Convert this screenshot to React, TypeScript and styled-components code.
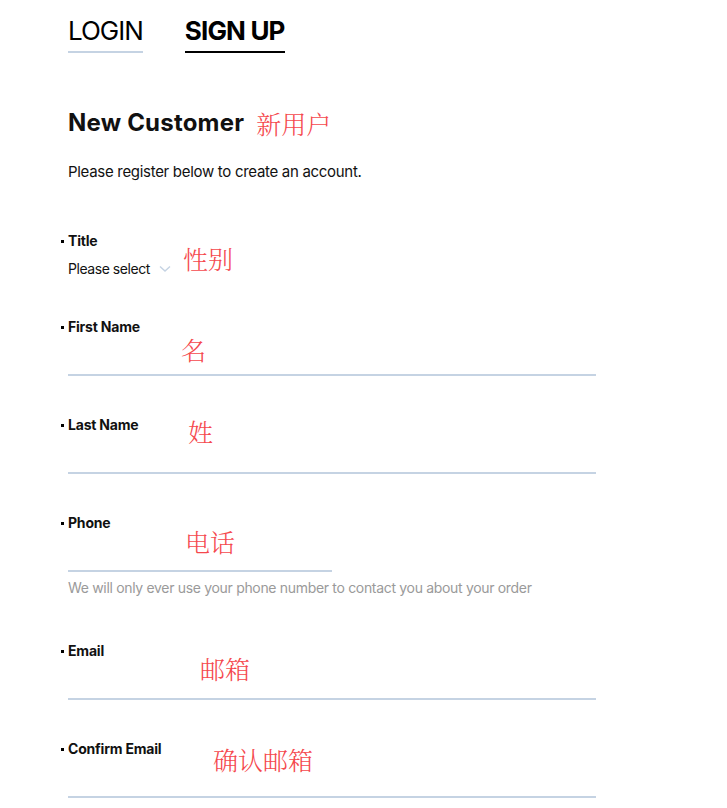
import React from 'react';
import styled, { createGlobalStyle } from 'styled-components';

const GlobalStyle = createGlobalStyle`
  body {
    margin: 0;
    background: #fff;
    font-family: Inter, "Noto Sans", sans-serif;
    color: #111;
  }
`;

const Page = styled.div`
  padding: 16px 0 0 68px;
  width: 528px;
`;

const Tabs = styled.nav`
  display: flex;
  gap: 42px;
`;

const Tab = styled.div<{ $active?: boolean }>`
  font-size: 26px;
  line-height: 30px;
  font-weight: ${(p) => (p.$active ? 700 : 400)};
  letter-spacing: ${(p) => (p.$active ? '-0.85px' : '-1px')};
  color: #000;
  padding-bottom: 5px;
  border-bottom: 2px solid ${(p) => (p.$active ? '#000' : '#c5d3e3')};
`;

const Heading = styled.h1`
  display: flex;
  align-items: center;
  margin: 55px 0 0;
  font-size: 24px;
  line-height: 30px;
  font-weight: 700;
  letter-spacing: 0.2px;
`;

const Note = styled.span<{ $top?: number; $left?: number }>`
  font-family: "Noto Serif CJK SC", "Noto Sans CJK SC", sans-serif;
  font-size: 25px;
  line-height: 28px;
  font-weight: 300;
  color: #f5484d;
  letter-spacing: 0;
`;

const HeadingNote = styled(Note)`
  margin-left: 12px;
`;

const FieldNote = styled(Note)`
  position: absolute;
  top: ${(p) => p.$top}px;
  left: ${(p) => p.$left}px;
`;

const Intro = styled.p`
  margin: 24px 0 50px;
  font-size: 15px;
  line-height: 20px;
  letter-spacing: -0.3px;
`;

const Form = styled.form`
  display: flex;
  flex-direction: column;
  gap: 40px;
`;

const Field = styled.div`
  position: relative;
  display: flex;
  flex-direction: column;
`;

const Label = styled.label`
  position: relative;
  font-size: 14px;
  line-height: 18px;
  font-weight: 700;
  letter-spacing: -0.2px;
  &::before {
    content: '';
    position: absolute;
    left: -7px;
    top: 8px;
    width: 3px;
    height: 3px;
    background: #000;
  }
`;

const Select = styled.div`
  display: flex;
  align-items: center;
  gap: 9px;
  margin-top: 10px;
  font-size: 14px;
  line-height: 18px;
  letter-spacing: -0.45px;
  color: #111;
`;

const Input = styled.div<{ $short?: boolean }>`
  height: 38px;
  width: ${(p) => (p.$short ? '264px' : '100%')};
  border-bottom: 2px solid #c5d3e3;
`;

const Help = styled.p`
  margin: 7px 0 5px;
  font-size: 14px;
  line-height: 18px;
  letter-spacing: -0.32px;
  color: #9a9a9a;
`;

const Chevron = () => (
  <svg width="12" height="8" viewBox="0 0 12 8">
    <path d="M1 1.5l5 4.5 5-4.5" fill="none" stroke="#c5d3e3" strokeWidth="1.4" />
  </svg>
);

interface TextField {
  label: string;
  note: string;
  top: number;
  left: number;
  short?: boolean;
  help?: string;
}

const fields: TextField[] = [
  { label: 'First Name', note: '名', top: 17, left: 113 },
  { label: 'Last Name', note: '姓', top: 1, left: 120 },
  {
    label: 'Phone',
    note: '电话',
    top: 13,
    left: 117,
    short: true,
    help: 'We will only ever use your phone number to contact you about your order',
  },
  { label: 'Email', note: '邮箱', top: 12, left: 132 },
  { label: 'Confirm Email', note: '确认邮箱', top: 5, left: 145 },
];

const App: React.FC = () => {
  return (
    <>
      <GlobalStyle />
      <Page>
        <Tabs>
          <Tab>LOGIN</Tab>
          <Tab $active>SIGN UP</Tab>
        </Tabs>
        <Heading>
          New Customer
          <HeadingNote>新用户</HeadingNote>
        </Heading>
        <Intro>Please register below to create an account.</Intro>
        <Form>
          <Field>
            <Label>Title</Label>
            <Select>
              Please select
              <Chevron />
            </Select>
            <FieldNote $top={12} $left={115}>性别</FieldNote>
          </Field>
          {fields.map((f) => (
            <Field key={f.label}>
              <Label>{f.label}</Label>
              <Input $short={f.short} />
              {f.help && <Help>{f.help}</Help>}
              <FieldNote $top={f.top} $left={f.left}>{f.note}</FieldNote>
            </Field>
          ))}
        </Form>
      </Page>
    </>
  );
};

export default App;
